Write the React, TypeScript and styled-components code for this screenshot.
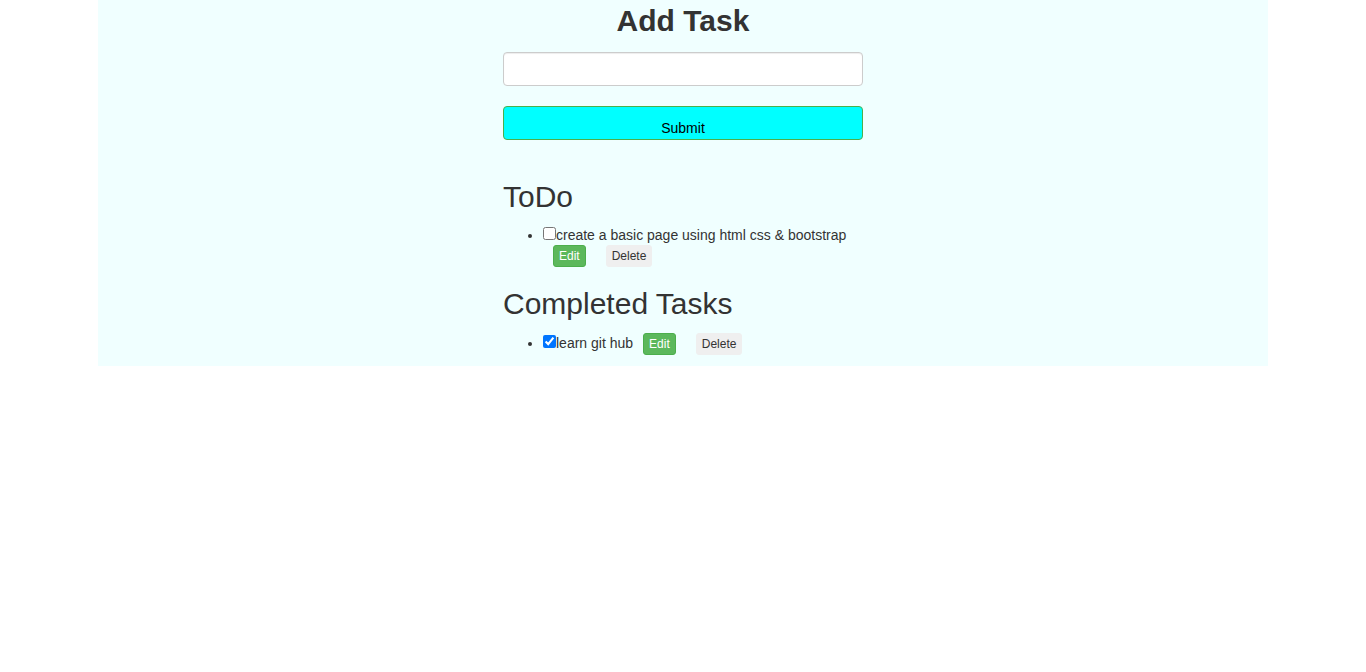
import React from "react";
import styled, { createGlobalStyle } from "styled-components";

const Global = createGlobalStyle`
  * { box-sizing: border-box; }
  body {
    margin: 0;
    background: #fff;
    font-family: "Liberation Sans", Arial, Helvetica, sans-serif;
    font-size: 14px;
    line-height: 1.42857143;
    color: #333;
  }
`;

const Container = styled.div`
  width: 1170px;
  margin: 0 auto;
  padding: 4px 15px 1px;
  background-color: #f0ffff;
  display: flow-root;
`;

const Column = styled.div`
  width: 360px;
  margin-left: 390px;
`;

const Title = styled.h2`
  margin: 0 0 15px;
  font-size: 30px;
  line-height: 1.1;
  font-weight: bold;
  text-align: center;
`;

const Form = styled.form`
  margin: 0 0 40px;
`;

const Input = styled.input`
  display: block;
  width: 100%;
  height: 34px;
  padding: 6px 12px;
  font: inherit;
  border: 1px solid #ccc;
  border-radius: 4px;
  background: #fff;
  box-shadow: inset 0 1px 1px rgba(0, 0, 0, 0.075);
  margin-bottom: 20px;
`;

const SubmitButton = styled.button`
  display: block;
  width: 100%;
  height: 34px;
  padding: 10px 12px 0;
  font-family: inherit;
  font-size: 14px;
  line-height: 20px;
  color: #000;
  background-color: #00ffff;
  border: 1px solid #4cae4c;
  border-radius: 4px;
  text-align: center;
`;

const SectionTitle = styled.h2<{ $gapBelow?: number }>`
  margin: 20px 0 ${(p) => p.$gapBelow ?? 10}px;
  font-size: 30px;
  line-height: 1.1;
  font-weight: normal;
`;

const List = styled.ul`
  margin: 0 0 10px;
  padding-left: 40px;
`;

const Check = styled.input`
  margin: 4px 0 0;
  width: 13px;
  height: 13px;
  vertical-align: baseline;
`;

const SmallButton = styled.button<{ $variant: "edit" | "delete" }>`
  display: inline-block;
  padding: 1px 5px;
  font-family: inherit;
  font-size: 12px;
  line-height: 1.5;
  border-radius: 3px;
  vertical-align: baseline;
  margin-left: ${(p) => (p.$variant === "edit" ? "10px" : "20px")};
  color: ${(p) => (p.$variant === "edit" ? "#fff" : "#333")};
  background-color: ${(p) => (p.$variant === "edit" ? "#5cb85c" : "#efefef")};
  border: 1px solid ${(p) => (p.$variant === "edit" ? "#4cae4c" : "#efefef")};
`;

type Task = { text: string; done: boolean };

const todo: Task[] = [
  { text: "create a basic page using html css & bootstrap", done: false },
];
const completed: Task[] = [{ text: "learn git hub", done: true }];

const TaskItem = ({ task }: { task: Task }) => (
  <li>
    <Check type="checkbox" defaultChecked={task.done} />
    {task.text}
    <SmallButton $variant="edit">Edit</SmallButton>
    <SmallButton $variant="delete">Delete</SmallButton>
  </li>
);

export default function App() {
  return (
    <>
      <Global />
      <Container>
        <Column>
          <Title>Add Task</Title>
          <Form onSubmit={(e) => e.preventDefault()}>
            <Input type="text" />
            <SubmitButton type="submit">Submit</SubmitButton>
          </Form>
          <SectionTitle>ToDo</SectionTitle>
          <List>
            {todo.map((t) => (
              <TaskItem key={t.text} task={t} />
            ))}
          </List>
          <SectionTitle $gapBelow={11}>Completed Tasks</SectionTitle>
          <List>
            {completed.map((t) => (
              <TaskItem key={t.text} task={t} />
            ))}
          </List>
        </Column>
      </Container>
    </>
  );
}
